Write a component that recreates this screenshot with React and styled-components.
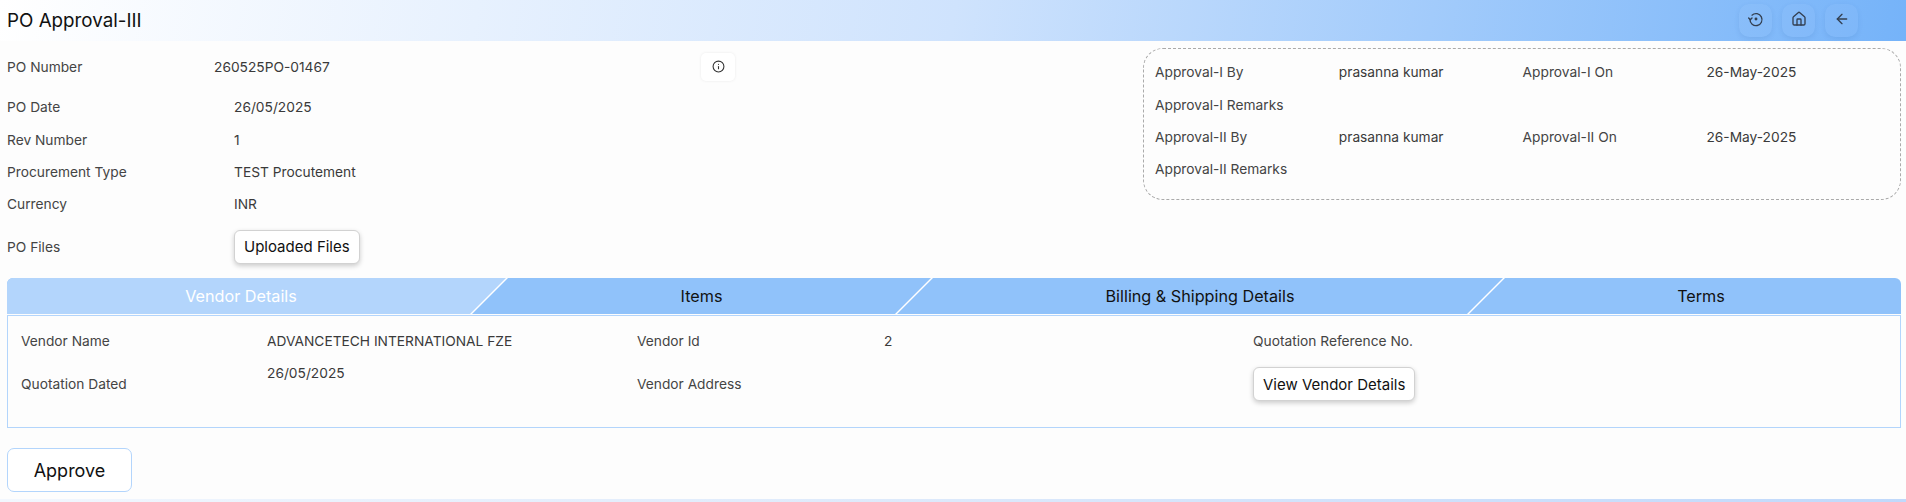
import React from "react";
import styled, { createGlobalStyle } from "styled-components";
import { House, ArrowLeft, Info } from "lucide-react";

const Global = createGlobalStyle`
  html, body { margin: 0; padding: 0; background: #fdfdfd; }
  body { font-family: Inter, "Liberation Sans", sans-serif; color: #444; overflow: hidden; }
  * { box-sizing: border-box; }
`;

const Page = styled.div`
  width: 1906px;
  height: 502px;
  display: flex;
  flex-direction: column;
  background: #fdfdfd;
`;

const Header = styled.header`
  height: 41px;
  flex: none;
  display: flex;
  align-items: flex-start;
  justify-content: space-between;
  padding: 4px 48px 0 7px;
  background: linear-gradient(100deg, #ffffff 0%, #cfe3fd 50%, #75b3f9 100%);
`;

const Title = styled.h1`
  margin: 5px 0 0;
  font-size: 18.8px;
  line-height: 24px;
  font-weight: 400;
  color: #111;
`;

const HeaderActions = styled.div`
  display: flex;
  gap: 10px;
`;

const IconButton = styled.button`
  width: 33px;
  height: 33px;
  display: flex;
  align-items: center;
  justify-content: center;
  padding: 0 0 4px;
  border: 0;
  border-radius: 10px;
  color: #333f50;
  background: rgba(255, 255, 255, 0.04);
  box-shadow: 0 2px 5px rgba(40, 90, 160, 0.12);
`;

const Top = styled.section`
  height: 237px;
  flex: none;
  display: flex;
  justify-content: space-between;
  padding: 7px 5px 0 7px;
`;

const Summary = styled.div`
  width: 728px;
  display: flex;
  flex-direction: column;
`;

const SummaryRow = styled.div`
  display: grid;
  grid-template-columns: ${(p) => p.$label || 227}px 1fr auto;
  align-items: center;
  height: ${(p) => p.$h || 32.4}px;
  margin-top: ${(p) => p.$mt || 0}px;
  margin-bottom: ${(p) => p.$mb || 0}px;
`;

const Label = styled.span`
  font-size: 13.75px;
  color: #444;
`;

const Value = styled.span`
  font-size: 13.75px;
  color: #3a3a3a;
`;

const InfoButton = styled.button`
  width: 34px;
  height: 28px;
  display: flex;
  align-items: center;
  justify-content: center;
  padding: 0;
  border: 0;
  border-radius: 5px;
  color: #333;
  background: #fff;
  box-shadow: 0 0 3px rgba(0, 0, 0, 0.08);
`;

const RaisedButton = styled.button`
  height: 34px;
  padding: 0 9px;
  justify-self: start;
  font-family: inherit;
  font-size: 15px;
  color: #111;
  background: #fff;
  border: 1px solid #d2d2d2;
  border-radius: 6px;
  box-shadow: 0 2px 5px rgba(0, 0, 0, 0.2);
`;

const ApprovalCard = styled.div`
  width: 758px;
  height: 152px;
  padding: 7px 11px;
  border: 1px dashed #aaa;
  border-radius: 20px;
  display: grid;
  grid-template-columns: repeat(4, 183.8px);
  grid-auto-rows: 32.4px;
  align-items: center;
`;

const FullRow = styled.div`
  grid-column: 1 / -1;
  font-size: 13.75px;
  color: #444;
`;

const TabBar = styled.nav`
  height: 36px;
  margin: 0 5px 0 7px;
  flex: none;
  display: grid;
  grid-template-columns: 482px 425px 572px 415px;
  background: #90c2fa;
  border-radius: 6px 6px 0 0;
  overflow: hidden;
`;

const Tab = styled.div`
  position: relative;
  display: flex;
  align-items: center;
  justify-content: center;
  padding: ${(p) => p.$pad || "0"};
  font-size: 16.2px;
  color: ${(p) => (p.$active ? "#fff" : "#111")};

  &::before {
    content: "";
    display: ${(p) => (p.$active ? "block" : "none")};
    position: absolute;
    inset: 0 0 0 -40px;
    background: #b3d5fc;
    transform: skewX(-45deg);
  }

  &::after {
    content: "";
    display: ${(p) => (p.$last ? "none" : "block")};
    position: absolute;
    top: 0;
    bottom: 0;
    right: -1px;
    width: 2px;
    background: #fff;
    transform: skewX(-45deg);
    z-index: 1;
  }
`;

const TabLabel = styled.span`
  position: relative;
`;

const TabContent = styled.section`
  height: 113px;
  margin: 1px 5px 0 7px;
  flex: none;
  padding: 1px 14px 0 13px;
  border: 1px solid #b3d5fc;
  display: grid;
  grid-template-columns: 246px 370px 247px 369px 1fr;
  grid-template-rows: 48px 38px;
  align-items: center;
`;

const DateValue = styled(Value)`
  align-self: start;
`;

const Footer = styled.footer`
  flex: 1;
  padding: 20px 7px 0;
`;

const ApproveButton = styled.button`
  width: 125px;
  height: 44px;
  font-family: inherit;
  font-size: 18px;
  color: #111;
  background: #fff;
  border: 1px solid #b3d5fc;
  border-radius: 7px;
`;

const BottomStrip = styled.div`
  height: 3px;
  flex: none;
  background: linear-gradient(90deg, #f2f7fe 0%, #dce9fb 50%, #c0d9fb 100%);
`;

const HistoryIcon = () => (
  <svg width="16" height="16" viewBox="0 0 24 24" fill="none" stroke="currentColor" strokeWidth="2" strokeLinecap="round" strokeLinejoin="round">
    <path d="M6 6.2A9 9 0 1 1 3 12.5" />
    <path d="M1 10.5l2.5 2.5 2.5-2.5" />
    <circle cx="12" cy="12" r="1.2" fill="currentColor" />
  </svg>
);

export default function App() {
  return (
    <Page>
      <Global />
      <Header>
        <Title>PO Approval-III</Title>
        <HeaderActions>
          <IconButton><HistoryIcon /></IconButton>
          <IconButton><House size={16} /></IconButton>
          <IconButton><ArrowLeft size={16} /></IconButton>
        </HeaderActions>
      </Header>
      <Top>
        <Summary>
          <SummaryRow $label={207} $h={37} $mb={6}>
            <Label>PO Number</Label>
            <Value>260525PO-01467</Value>
            <InfoButton><Info size={13} /></InfoButton>
          </SummaryRow>
          <SummaryRow><Label>PO Date</Label><Value>26/05/2025</Value></SummaryRow>
          <SummaryRow><Label>Rev Number</Label><Value>1</Value></SummaryRow>
          <SummaryRow><Label>Procurement Type</Label><Value>TEST Procutement</Value></SummaryRow>
          <SummaryRow><Label>Currency</Label><Value>INR</Value></SummaryRow>
          <SummaryRow $h={34} $mt={9}>
            <Label>PO Files</Label>
            <RaisedButton>Uploaded Files</RaisedButton>
          </SummaryRow>
        </Summary>
        <ApprovalCard>
          <Label>Approval-I By</Label><Value>prasanna kumar</Value><Label>Approval-I On</Label><Value>26-May-2025</Value>
          <FullRow>Approval-I Remarks</FullRow>
          <Label>Approval-II By</Label><Value>prasanna kumar</Value><Label>Approval-II On</Label><Value>26-May-2025</Value>
          <FullRow>Approval-II Remarks</FullRow>
        </ApprovalCard>
      </Top>
      <TabBar>
        <Tab $active $pad="0 14px 0 0"><TabLabel>Vendor Details</TabLabel></Tab>
        <Tab><TabLabel>Items</TabLabel></Tab>
        <Tab><TabLabel>Billing &amp; Shipping Details</TabLabel></Tab>
        <Tab $last $pad="0 0 0 15px"><TabLabel>Terms</TabLabel></Tab>
      </TabBar>
      <TabContent>
        <Label>Vendor Name</Label>
        <Value>ADVANCETECH INTERNATIONAL FZE</Value>
        <Label>Vendor Id</Label>
        <Value>2</Value>
        <Label>Quotation Reference No.</Label>
        <Label>Quotation Dated</Label>
        <DateValue>26/05/2025</DateValue>
        <Label>Vendor Address</Label>
        <span />
        <RaisedButton>View Vendor Details</RaisedButton>
      </TabContent>
      <Footer>
        <ApproveButton>Approve</ApproveButton>
      </Footer>
      <BottomStrip />
    </Page>
  );
}
